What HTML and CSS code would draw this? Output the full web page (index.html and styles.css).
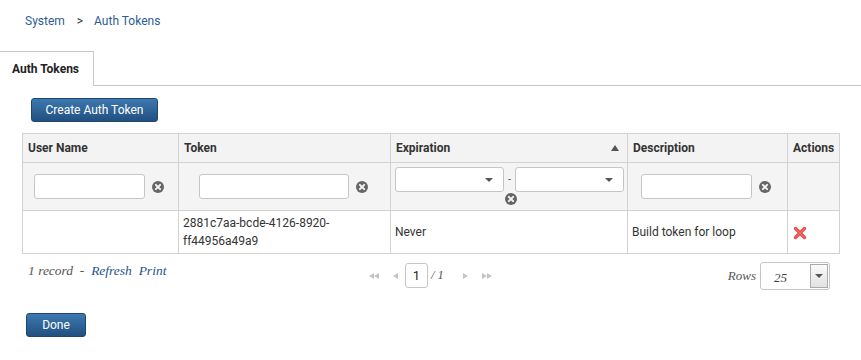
FILE: index.html
```html
<!DOCTYPE html>
<html>
<head>
<meta charset="utf-8">
<link rel="stylesheet" href="styles.css">
</head>
<body>
<div class="crumbs"><a class="crumb">System</a><span class="sep">&gt;</span><a class="crumb">Auth Tokens</a></div>
<div class="tabs"><div class="tab">Auth Tokens</div><div class="tabline"></div></div>
<div class="content">
  <button class="btn create">Create Auth Token</button>
  <table class="grid">
    <colgroup><col style="width:156px"><col style="width:212px"><col style="width:237px"><col style="width:160px"><col style="width:52px"></colgroup>
    <thead>
      <tr class="hdr">
        <th>User Name</th><th>Token</th><th><div class="sorth"><span>Expiration</span><span class="sortarrow"></span></div></th><th>Description</th><th>Actions</th>
      </tr>
      <tr class="filters">
        <td><div class="fcell"><input class="finput w111" type="text"><span class="clr"></span></div></td>
        <td><div class="fcell"><input class="finput w149" type="text"><span class="clr"></span></div></td>
        <td class="exp">
          <div class="range"><div class="sel"><span class="caret"></span></div><span class="dash">-</span><div class="sel"><span class="caret"></span></div></div>
          <div class="expclr"><span class="clr"></span></div>
        </td>
        <td><div class="fcell"><input class="finput w111" type="text"><span class="clr"></span></div></td>
        <td></td>
      </tr>
    </thead>
    <tbody>
      <tr class="row">
        <td></td>
        <td class="tok">2881c7aa-bcde-4126-8920-<br>ff44956a49a9</td>
        <td>Never</td>
        <td>Build token for loop</td>
        <td class="act"><svg width="14" height="14" viewBox="0 0 14 14"><path d="M2.5 2.5 L11.5 11.5 M11.5 2.5 L2.5 11.5" stroke="#e8403f" stroke-width="3.2" stroke-linecap="round"/><path d="M2.5 2.5 L11.5 11.5 M11.5 2.5 L2.5 11.5" stroke="#f26a68" stroke-width="1.2" stroke-linecap="round"/></svg></td>
      </tr>
    </tbody>
  </table>
  <div class="pager">
    <div class="pinfo">1 record&nbsp; - &nbsp;<a>Refresh</a>&nbsp; <a>Print</a></div>
    <div class="pnav">
      <span class="dbl l"><i class="tl"></i><i class="tl"></i></span>
      <span class="sgl"><i class="tl"></i></span>
      <span class="pbox">1</span>
      <span class="of">/ 1</span>
      <span class="sgl"><i class="tr"></i></span>
      <span class="dbl"><i class="tr"></i><i class="tr"></i></span>
    </div>
    <div class="prows"><span class="rlabel">Rows</span><div class="rsel"><span class="rval">25</span><span class="rbtn"><span class="caret"></span></span></div></div>
  </div>
  <button class="btn done">Done</button>
</div>
</body>
</html>
```
FILE: styles.css
```css
* { box-sizing: border-box; }
html, body { margin: 0; padding: 0; background: #fff; }
body { font-family: Roboto, "Liberation Sans", sans-serif; font-size: 12px; color: #333; width: 861px; height: 360px; overflow: hidden; }

.crumbs { height: 51px; padding: 14px 0 0 25px; font-size: 12px; display: flex; align-items: flex-start; }
.crumb { color: #2c5d94; }
.sep { color: #333; margin: 0 11px 0 12px; }

.tabs { display: flex; height: 35px; }
.tab { width: 94px; border-top: 1px solid #c8c8c8; border-right: 1px solid #c8c8c8; font-weight: bold; font-size: 12px; color: #222; padding: 10px 0 0 12px; background: #fff; }
.tabline { flex: 1; border-bottom: 1px solid #c8c8c8; }

.content { padding: 12px 0 0 22px; }
.btn { display: block; font-family: Roboto, "Liberation Sans", sans-serif; color: #fff; font-size: 12px; border: 1px solid #1d4670; border-radius: 3px; background: linear-gradient(#3d78b0, #21507f); height: 24px; padding: 0; }
.create { width: 127px; margin-left: 9px; }

.grid { margin-top: 11px; border-collapse: collapse; table-layout: fixed; width: 817px; }
.grid th, .grid td { border: 1px solid #d2d2d2; padding: 0 4px; }
.hdr th { height: 29px; background: #f3f3f3; text-align: left; font-weight: bold; font-size: 12px; color: #333; padding: 0 5px; }
.sorth { display: flex; justify-content: space-between; align-items: center; padding-right: 3px; }
.sortarrow { width: 0; height: 0; border-left: 4px solid transparent; border-right: 4px solid transparent; border-bottom: 6px solid #555; }
.filters td { height: 48px; background: #f4f4f4; }
.fcell { display: flex; align-items: center; justify-content: center; padding-right: 3px; }
.finput { height: 25px; border: 1px solid #c6c6c6; border-radius: 3px; background: #fff; margin: 0; }
.w111 { width: 111px; }
.w149 { width: 150px; }
.clr { display: inline-block; width: 12px; height: 12px; border-radius: 50%; background: #666; position: relative; margin-left: 7px; flex: none; }
.clr::before, .clr::after { content: ""; position: absolute; left: 5px; top: 2px; width: 2px; height: 8px; background: #f4f4f4; border-radius: 1px; }
.clr::before { transform: rotate(45deg); }
.clr::after { transform: rotate(-45deg); }
.filters td.exp { padding: 4px 3px 0 4px; vertical-align: top; }
.range { display: flex; align-items: center; }
.sel { width: 109px; height: 25px; border: 1px solid #c6c6c6; border-radius: 3px; background: #fff; position: relative; }
.sel .caret { position: absolute; right: 10px; top: 10px; }
.caret { display: block; width: 0; height: 0; border-left: 4px solid transparent; border-right: 4px solid transparent; border-top: 4px solid #555; }
.dash { width: 11px; text-align: center; font-size: 11px; color: #555; }
.expclr { padding-left: 110px; margin-top: 1px; line-height: 0; }
.expclr .clr { margin-left: 0; }

.row td { height: 43px; font-size: 12px; color: #333; }
.tok { line-height: 18px; }
.act { text-align: left; padding: 4px 0 0 5px !important; }

.pager { display: flex; width: 817px; height: 48px; align-items: flex-start; position: relative; }
.pinfo { font-family: "Liberation Serif", serif; font-style: italic; font-size: 13.5px; color: #555; padding: 9px 0 0 6px; width: 342px; }
.pinfo a { color: #24548a; }
.pnav { display: flex; align-items: center; margin-left: 5px; padding-top: 9px; }
.pnav i { display: inline-block; width: 0; height: 0; border-top: 3.5px solid transparent; border-bottom: 3.5px solid transparent; }
.pnav i.tl { border-right: 5px solid #c4c4c4; }
.pnav i.tr { border-left: 5px solid #c4c4c4; }
.dbl, .sgl { display: flex; }
.dbl.l { margin-right: 14px; }
.sgl { margin-right: 7px; }
.pbox { width: 23px; height: 25px; border: 1px solid #c6c6c6; border-radius: 3px; display: flex; align-items: center; justify-content: center; font-size: 13px; color: #222; }
.of { font-family: "Liberation Serif", serif; font-style: italic; font-size: 12.5px; color: #555; margin: 0 19px 0 3px; }
.of + .sgl { margin-right: 14px; }
.prows { margin-left: auto; display: flex; align-items: center; padding-top: 8px; margin-right: 9px; }
.rlabel { font-family: "Liberation Serif", serif; font-style: italic; font-size: 13px; color: #555; margin-right: 4px; }
.rsel { width: 70px; height: 28px; border: 1px solid #c6c6c6; border-radius: 3px; display: flex; }
.rval { flex: 1; font-family: "Liberation Serif", serif; font-style: italic; font-size: 13px; color: #444; padding: 7px 0 0 13px; }
.rbtn { width: 18px; margin: 1px; border: 1px solid #aaa; background: linear-gradient(#fafafa, #e2e2e2); display: flex; align-items: center; justify-content: center; }
.done { width: 60px; margin-left: 4px; margin-top: 11px; }
```
